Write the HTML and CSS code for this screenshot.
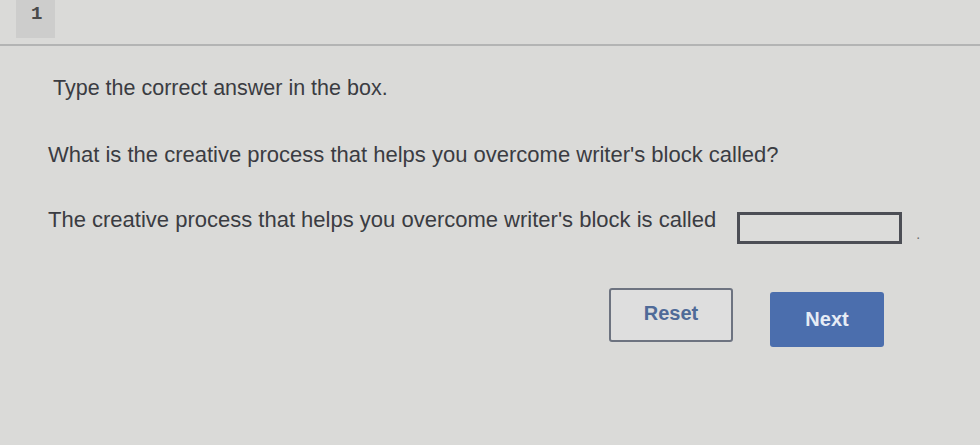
FILE: index.html
```html
<!DOCTYPE html>
<html>
<head>
<meta charset="utf-8">
<link rel="stylesheet" href="styles.css">
</head>
<body>
<div class="page">
  <header class="head">
    <div class="num">1</div>
  </header>
  <main class="content">
    <p class="instr">Type the correct answer in the box.</p>
    <p class="question">What is the creative process that helps you overcome writer's block called?</p>
    <div class="answer">
      <span class="prompt">The creative process that helps you overcome writer's block is called</span>
      <input class="box" type="text" aria-label="answer">
      <span class="dot">.</span>
    </div>
    <div class="actions">
      <button class="btn reset">Reset</button>
      <button class="btn next">Next</button>
    </div>
  </main>
</div>
</body>
</html>
```

FILE: styles.css
```css
html, body {
  margin: 0;
  padding: 0;
}
body {
  background: #dadad8;
  font-family: "Liberation Sans", Arial, sans-serif;
  color: #3a3c42;
  width: 980px;
  height: 445px;
  overflow: hidden;
}
.page {
  display: flex;
  flex-direction: column;
}
.head {
  height: 44px;
  border-bottom: 2px solid #b3b4b4;
  display: flex;
  align-items: flex-start;
  padding-left: 16px;
}
.num {
  width: 39px;
  height: 38px;
  background: #cdcdcc;
  font-family: "Liberation Mono", "DejaVu Sans Mono", monospace;
  font-weight: bold;
  font-size: 19px;
  color: #4a4a4a;
  padding: 3px 0 0 15px;
  box-sizing: border-box;
}
.content {
  padding-left: 48px;
  display: flex;
  flex-direction: column;
}
.instr {
  margin: 29px 0 0 5px;
  font-size: 21.5px;
  line-height: 26px;
}
.question {
  margin: 41px 0 0 0;
  font-size: 22px;
  line-height: 26px;
}
.answer {
  margin-top: 39px;
  display: flex;
  align-items: flex-start;
  font-size: 22px;
  line-height: 26px;
}
.box {
  margin-top: 5px;
  margin-left: 21px;
  width: 165px;
  height: 32px;
  box-sizing: border-box;
  border: 3px solid #4c4e55;
  background: #dcdcda;
  padding: 0;
}
.dot {
  margin: 14px 0 0 14px;
  color: #6a6a6a;
  font-size: 14px;
}
.actions {
  margin-top: 41px;
  margin-left: 561px;
  display: flex;
  align-items: flex-start;
  gap: 37px;
}
.btn {
  font-family: "Liberation Sans", Arial, sans-serif;
  font-size: 20px;
  font-weight: bold;
  border-radius: 3px;
  cursor: pointer;
}
.reset {
  width: 124px;
  height: 54px;
  background: #dedede;
  border: 2px solid #6d7380;
  color: #4f6a98;
  padding-bottom: 4px;
}
.next {
  margin-top: 4px;
  width: 114px;
  height: 55px;
  background: #4b6ead;
  border: none;
  color: #e6ecf5;
}
```
